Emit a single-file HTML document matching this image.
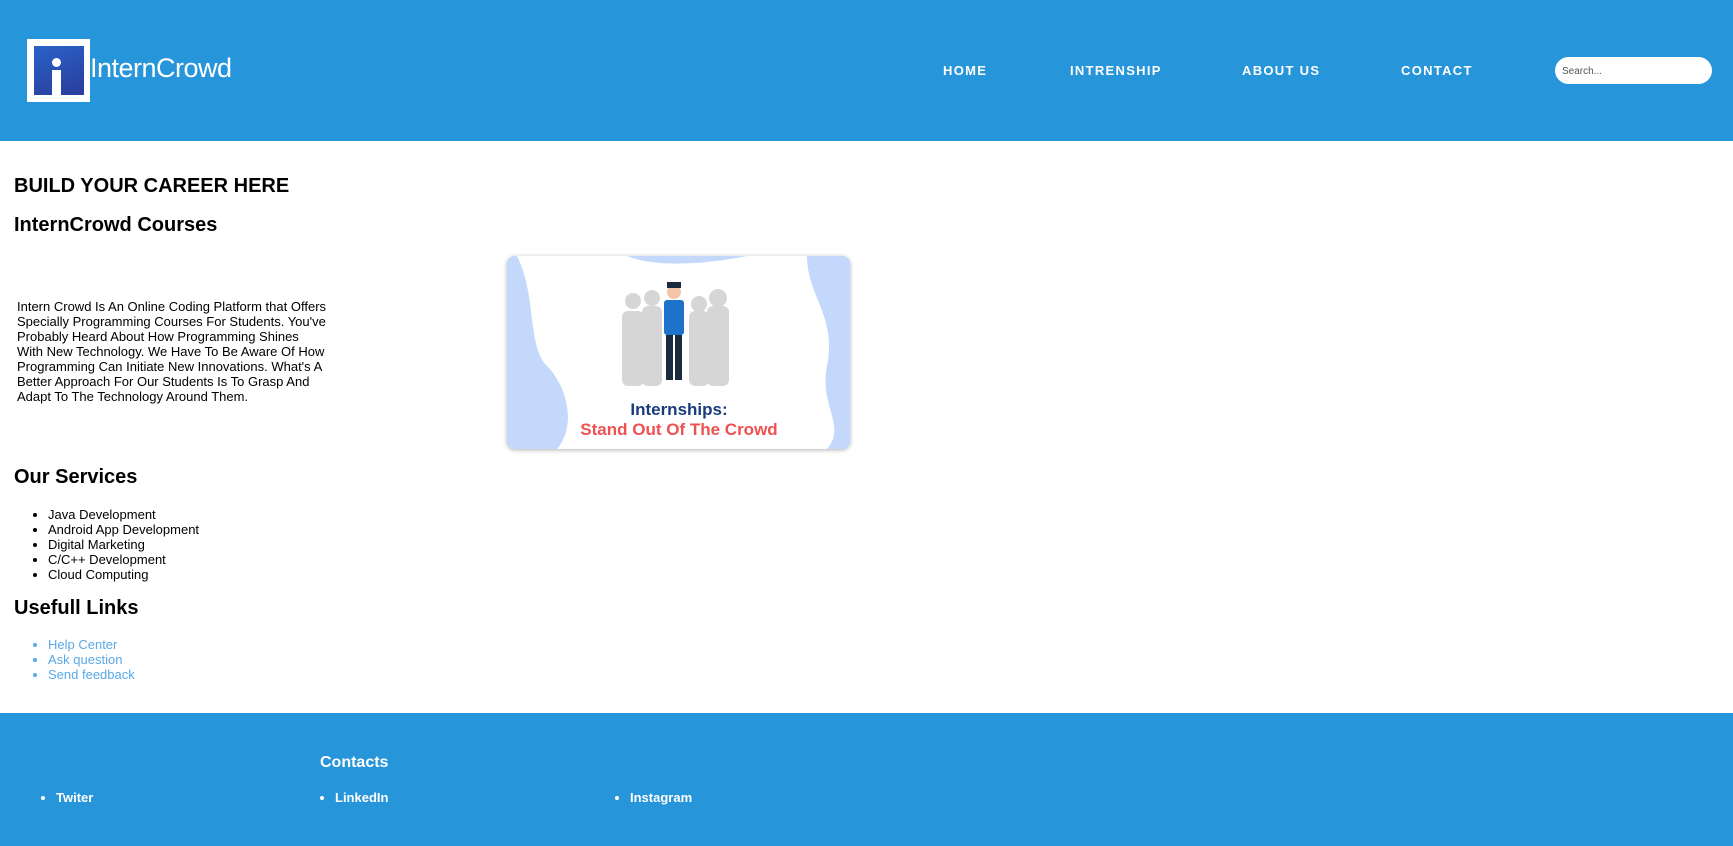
<!DOCTYPE html>
<html><head><meta charset="utf-8"><style>
*{margin:0;padding:0;box-sizing:border-box}
body{width:1733px;height:846px;position:relative;font-family:"Liberation Sans",Arial,sans-serif;background:#fff;overflow:hidden;color:#000}
.a{position:absolute;white-space:nowrap}
header{position:absolute;left:0;top:0;width:1733px;height:141px;background:#2795d9}
.nav{color:#fff;font-weight:bold;font-size:13px;letter-spacing:1.3px;top:63px}
h2{font-size:20px;font-weight:bold}
.p{font-size:13px;line-height:15px}
ul.l{list-style:disc;font-size:13px;line-height:15px;left:48px}
footer{position:absolute;left:0;top:713px;width:1733px;height:133px;background:#2795d9;color:#fff}
.f{color:#fff;font-size:13px;font-weight:bold}
</style></head><body>
<header>
 <div class="a" style="left:27px;top:39px;width:63px;height:63px;background:#fff">
  <div style="position:absolute;left:7px;top:7px;width:50px;height:49px;background:linear-gradient(160deg,#2a62c8,#2a3d9c)"></div>
  <div style="position:absolute;left:25px;top:19px;width:9px;height:9px;border-radius:50%;background:#fff"></div>
  <div style="position:absolute;left:25px;top:31px;width:9px;height:25px;background:#fff"></div>
 </div>
 <div class="a" style="left:90px;top:53px;color:#fff;font-size:27px;letter-spacing:-0.5px">InternCrowd</div>
 <div class="a nav" style="left:943px">HOME</div>
 <div class="a nav" style="left:1070px">INTRENSHIP</div>
 <div class="a nav" style="left:1242px">ABOUT US</div>
 <div class="a nav" style="left:1401px">CONTACT</div>
 <div class="a" style="left:1555px;top:57px;width:157px;height:27px;background:#fff;border-radius:14px;font-size:10px;color:#555;padding:9px 0 0 7px">Search...</div>
</header>
<h2 class="a" style="left:14px;top:175px">BUILD YOUR CAREER HERE</h2>
<h2 class="a" style="left:14px;top:214px">InternCrowd Courses</h2>
<div class="a p" style="left:17px;top:299px">Intern Crowd Is An Online Coding Platform that Offers<br>Specially Programming Courses For Students. You've<br>Probably Heard About How Programming Shines<br>With New Technology. We Have To Be Aware Of How<br>Programming Can Initiate New Innovations. What's A<br>Better Approach For Our Students Is To Grasp And<br>Adapt To The Technology Around Them.</div>
<div class="a" style="left:507px;top:256px;width:343px;height:193px;border-radius:8px;overflow:hidden;box-shadow:0 1px 5px rgba(0,0,0,.3);background:#c3d8fb">
<svg width="343" height="193" viewBox="0 0 343 193">
<path d="M10 0 H120 C150 12 200 8 240 0 H300 C300 40 330 60 320 110 C312 150 340 170 320 193 H50 C70 170 60 130 40 110 C20 90 30 40 10 0Z" fill="#fff"/>
<g fill="#d6d6d6"><rect x="115" y="55" width="22" height="75" rx="6"/><rect x="135" y="50" width="20" height="80" rx="6"/><rect x="182" y="55" width="20" height="75" rx="6"/><rect x="200" y="50" width="22" height="80" rx="6"/>
<circle cx="126" cy="45" r="8"/><circle cx="145" cy="42" r="8"/><circle cx="192" cy="48" r="8"/><circle cx="211" cy="42" r="9"/></g>
<circle cx="167" cy="36" r="7" fill="#f2c6a6"/><rect x="160" y="26" width="14" height="6" fill="#1a2b3e"/>
<rect x="157" y="44" width="20" height="35" rx="3" fill="#1d73c9"/>
<rect x="159" y="79" width="7" height="45" fill="#1a2b3e"/><rect x="168" y="79" width="7" height="45" fill="#1a2b3e"/>
<text x="172" y="159" text-anchor="middle" font-family="Liberation Sans" font-weight="bold" font-size="17" fill="#1a3d7a">Internships:</text>
<text x="172" y="179" text-anchor="middle" font-family="Liberation Sans" font-weight="bold" font-size="17" fill="#ef5050">Stand Out Of The Crowd</text>
</svg></div>
<h2 class="a" style="left:14px;top:466px">Our Services</h2>
<ul class="a l" style="top:507px"><li>Java Development</li><li>Android App Development</li><li>Digital Marketing</li><li>C/C++ Development</li><li>Cloud Computing</li></ul>
<h2 class="a" style="left:14px;top:597px">Usefull Links</h2>
<ul class="a l" style="top:637px;color:#5aa9e6"><li>Help Center</li><li>Ask question</li><li>Send feedback</li></ul>
<footer>
 <div class="a" style="left:320px;top:41px;font-size:16px;font-weight:bold">Contacts</div>
 <ul class="a f" style="left:56px;top:77px"><li>Twiter</li></ul>
 <ul class="a f" style="left:335px;top:77px"><li>LinkedIn</li></ul>
 <ul class="a f" style="left:630px;top:77px"><li>Instagram</li></ul>
</footer>
</body></html>
